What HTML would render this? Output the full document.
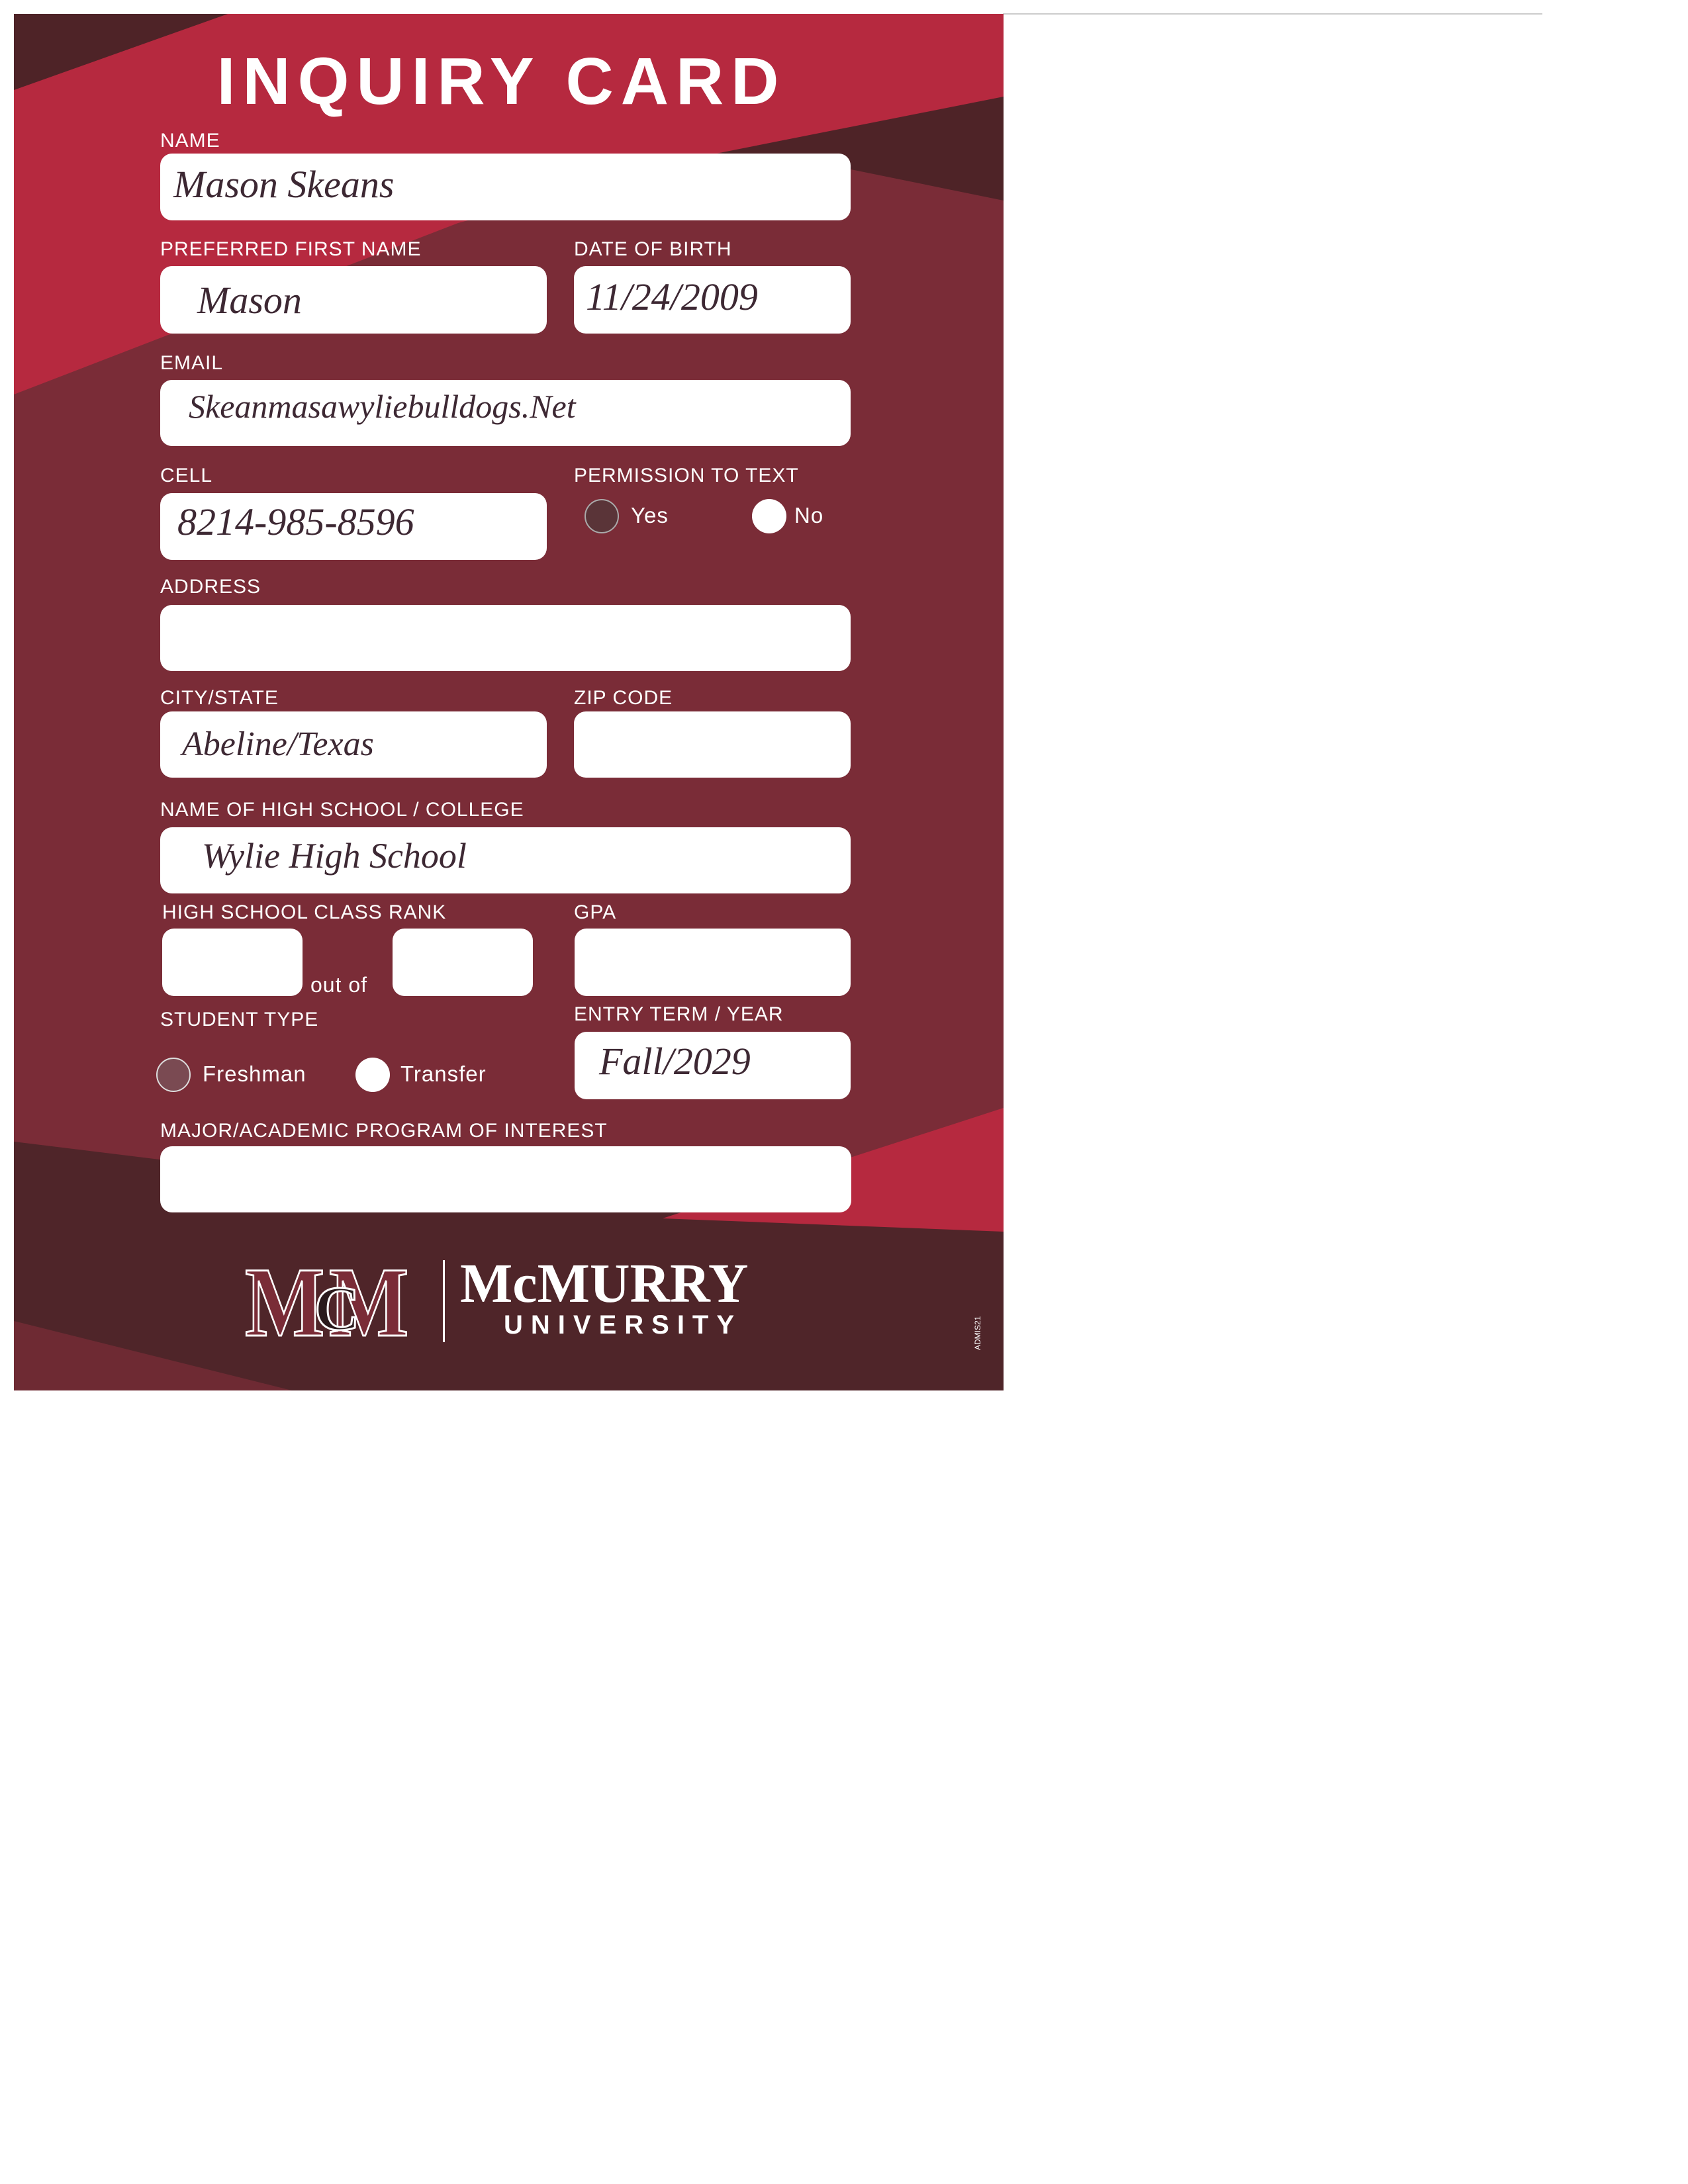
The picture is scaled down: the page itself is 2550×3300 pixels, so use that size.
<!DOCTYPE html>
<html><head><meta charset="utf-8"><style>
body{margin:0;width:2550px;height:3300px;background:#fff;position:relative;overflow:hidden;font-family:"Liberation Sans",sans-serif}
.card{position:absolute;left:21px;top:21px;width:1495px;height:2080px;overflow:hidden;background:#7a2c37}
.abs{position:absolute}
.lbl{position:absolute;color:#fff;font-size:30px;letter-spacing:1px;white-space:nowrap}
.box{position:absolute;background:#fff;border-radius:18px}
.hw{position:absolute;font-family:"Liberation Serif",serif;font-style:italic;color:#3d2833;font-size:58px;white-space:nowrap}
.rad{position:absolute;width:52px;height:52px;border-radius:50%;background:#fff}
.opt{position:absolute;color:#fff;font-size:33px;letter-spacing:1px}
.m{position:absolute;font-family:'Liberation Serif',serif;font-weight:bold;color:#7a2c37;-webkit-text-stroke:3px #fff;line-height:1}
</style></head><body>
<div class="abs" style="left:1515px;top:20px;width:815px;height:2px;background:#ccc"></div>
<div class="card">
<svg class="abs" style="left:0;top:0" width="1495" height="2080">
<polygon points="0,115 323,0 1495,0 1495,150 1066,210 671,316 0,575" fill="#b6293f"/>
<polygon points="0,0 323,0 0,115" fill="#4e2327"/>
<polygon points="1066,210 1495,125 1495,282 1240,230" fill="#4e2327"/>
<polygon points="0,1704 700,1790 1495,1835 1495,2080 0,2080" fill="#4f2529"/>
<polygon points="980,1820 1495,1653 1495,1840" fill="#b6293f"/>
<polygon points="0,1975 420,2080 0,2080" fill="#6e2a33"/>
</svg>
</div>
<div class="abs" style="left:0;top:88px;width:1515px;text-align:center;color:#fff;font-weight:bold;font-size:100px;letter-spacing:11px;line-height:70px">INQUIRY CARD</div>

<div class="lbl" style="left:242px;top:196px">NAME</div>
<div class="box" style="left:242px;top:232px;width:1043px;height:101px"></div>
<div class="hw" style="left:262px;top:245px">Mason Skeans</div>

<div class="lbl" style="left:242px;top:360px">PREFERRED FIRST NAME</div>
<div class="lbl" style="left:867px;top:360px">DATE OF BIRTH</div>
<div class="box" style="left:242px;top:402px;width:584px;height:102px"></div>
<div class="box" style="left:867px;top:402px;width:418px;height:102px"></div>
<div class="hw" style="left:298px;top:420px">Mason</div>
<div class="hw" style="left:885px;top:415px">11/24/2009</div>

<div class="lbl" style="left:242px;top:532px">EMAIL</div>
<div class="box" style="left:242px;top:574px;width:1043px;height:100px"></div>
<div class="hw" style="left:285px;top:585px;font-size:50px">Skeanmasawyliebulldogs.Net</div>

<div class="lbl" style="left:242px;top:702px">CELL</div>
<div class="lbl" style="left:867px;top:702px">PERMISSION TO TEXT</div>
<div class="box" style="left:242px;top:745px;width:584px;height:101px"></div>
<div class="hw" style="left:268px;top:755px">8214-985-8596</div>
<div class="rad" style="left:883px;top:754px;background:#5a3438;border:2px solid #aaa;width:48px;height:48px"></div>
<div class="opt" style="left:953px;top:760px">Yes</div>
<div class="rad" style="left:1136px;top:754px"></div>
<div class="opt" style="left:1200px;top:760px">No</div>

<div class="lbl" style="left:242px;top:870px">ADDRESS</div>
<div class="box" style="left:242px;top:914px;width:1043px;height:100px"></div>

<div class="lbl" style="left:242px;top:1038px">CITY/STATE</div>
<div class="lbl" style="left:867px;top:1038px">ZIP CODE</div>
<div class="box" style="left:242px;top:1075px;width:584px;height:100px"></div>
<div class="box" style="left:867px;top:1075px;width:418px;height:100px"></div>
<div class="hw" style="left:275px;top:1095px;font-size:52px">Abeline/Texas</div>

<div class="lbl" style="left:242px;top:1207px">NAME OF HIGH SCHOOL / COLLEGE</div>
<div class="box" style="left:242px;top:1250px;width:1043px;height:100px"></div>
<div class="hw" style="left:305px;top:1262px;font-size:54px">Wylie High School</div>

<div class="lbl" style="left:245px;top:1362px">HIGH SCHOOL CLASS RANK</div>
<div class="lbl" style="left:867px;top:1362px">GPA</div>
<div class="box" style="left:245px;top:1403px;width:212px;height:102px"></div>
<div class="box" style="left:593px;top:1403px;width:212px;height:102px"></div>
<div class="box" style="left:868px;top:1403px;width:417px;height:102px"></div>
<div class="opt" style="left:469px;top:1470px;font-size:32px">out of</div>

<div class="lbl" style="left:242px;top:1524px">STUDENT TYPE</div>
<div class="lbl" style="left:867px;top:1516px">ENTRY TERM / YEAR</div>
<div class="box" style="left:868px;top:1559px;width:417px;height:102px"></div>
<div class="hw" style="left:905px;top:1570px">Fall/2029</div>
<div class="rad" style="left:236px;top:1598px;background:#7a4a52;border:2px solid #ddd;width:48px;height:48px"></div>
<div class="opt" style="left:306px;top:1604px">Freshman</div>
<div class="rad" style="left:537px;top:1598px"></div>
<div class="opt" style="left:605px;top:1604px">Transfer</div>

<div class="lbl" style="left:242px;top:1692px">MAJOR/ACADEMIC PROGRAM OF INTEREST</div>
<div class="box" style="left:242px;top:1732px;width:1044px;height:100px"></div>

<div class="m" style="left:370px;top:1893px;font-size:150px;transform:scaleX(0.85);transform-origin:left">M</div>
<div class="m" style="left:497px;top:1893px;font-size:150px;transform:scaleX(0.85);transform-origin:left">M</div>
<div class="m" style="left:475px;top:1930px;font-size:95px;color:#2a1a1c">C</div>
<div class="abs" style="left:669px;top:1904px;width:3px;height:124px;background:#fff"></div>
<div class="abs" style="left:695px;top:1890px;color:#fff;font-family:'Liberation Serif',serif;font-weight:bold;font-size:84px;line-height:100px">McMURRY</div>
<div class="abs" style="left:761px;top:1980px;color:#fff;font-weight:bold;font-size:40px;letter-spacing:12px">UNIVERSITY</div>
<div class="abs" style="left:1470px;top:2040px;color:#fff;font-size:12px;transform:rotate(-90deg);transform-origin:left top">ADMIS21</div>
</body></html>
